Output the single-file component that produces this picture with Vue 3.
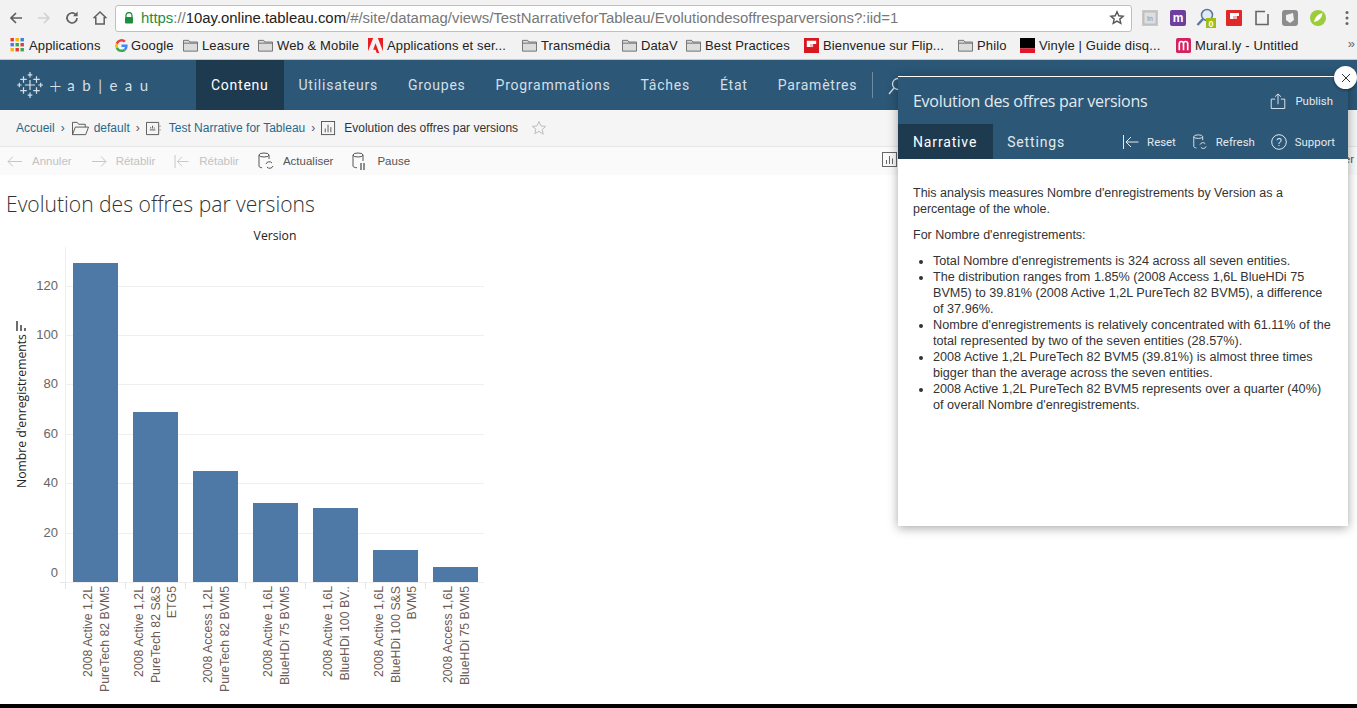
<template>
  <div class="page">
    <!-- browser chrome -->
    <div class="browser-bar">
      <svg class="nav-ic" viewBox="0 0 16 16"><path d="M14 8H3M8 3 3 8l5 5" fill="none" stroke="#5f5f5f" stroke-width="1.7" /></svg>
      <svg class="nav-ic" viewBox="0 0 16 16"><path d="M2 8h11M8 3l5 5-5 5" fill="none" stroke="#d2d2d2" stroke-width="1.7" /></svg>
      <svg class="nav-ic" viewBox="0 0 16 16"><path d="M13 8a5 5 0 1 1-1.5-3.6" fill="none" stroke="#5f5f5f" stroke-width="1.7" /><path d="M13.6 1.6v4.6H9z" fill="#5f5f5f" /></svg>
      <svg class="nav-ic" viewBox="0 0 16 16"><path d="M1.500 8.200 8 2l6.500 6.200M3.800 7v7h8.400V7" fill="none" stroke="#5f5f5f" stroke-width="1.500" /></svg>
      <div class="url-box">
        <svg class="lock" viewBox="0 0 10 12"><path d="M2 5V3.500a3 3 0 0 1 6 0V5" fill="none" stroke="#1e8e3e" stroke-width="1.300" /><rect x="1" y="5" width="8" height="6.500" rx="1" fill="#1e8e3e" /></svg>
        <span class="url"><span class="url-https">https</span><span class="url-dim">://</span>10ay.online.tableau.com<span class="url-dim">/#/site/datamag/views/TestNarrativeforTableau/Evolutiondesoffresparversions?:iid=1</span></span>
        <svg class="url-star" viewBox="0 0 16 16"><path d="m8 1.800 1.800 4 4.300.4-3.300 2.900 1 4.300L8 11.100l-3.800 2.300 1-4.300-3.300-2.900 4.300-.4z" fill="none" stroke="#555" stroke-width="1.400" /></svg>
      </div>
      <div class="ext-icons">
        <svg viewBox="0 0 16 16"><rect width="16" height="16" fill="#c9c9c9" /><rect x="2" y="2" width="12" height="12" fill="#dedede" stroke="#aaa" stroke-width=".6" /><text x="8" y="11" font-size="7" text-anchor="middle" fill="#8a8a8a" font-family="Liberation Sans">In</text></svg>
        <svg viewBox="0 0 16 16"><rect width="16" height="16" rx="2" fill="#6f3f9e" /><text x="8" y="12" font-size="12" font-weight="700" text-anchor="middle" fill="#fff" font-family="Liberation Sans">m</text></svg>
        <svg class="ext-wide" viewBox="0 0 20 20"><circle cx="11" cy="7" r="5.500" fill="#dfeaf5" stroke="#56789c" stroke-width="1.500" /><path d="M7 11 1.500 17" stroke="#56789c" stroke-width="2.400" /><rect x="10" y="10" width="10" height="10" fill="#a2bd14" /><text x="15" y="18.500" font-size="9" font-weight="700" text-anchor="middle" fill="#fff" font-family="Liberation Sans">0</text></svg>
        <svg viewBox="0 0 16 16"><rect width="16" height="16" rx="1" fill="#e12828" /><path d="M4 3h9v3H7v3H4z" fill="#fff" /><path d="M7 6h4v3H7z" fill="#f3b0b0" /></svg>
        <svg viewBox="0 0 16 16"><path d="M11 1.500H2v13h12V4" fill="none" stroke="#666" stroke-width="1.600" /></svg>
        <svg viewBox="0 0 16 16"><rect width="16" height="16" rx="3" fill="#8d8d8d" /><path d="M4 5l7-2 1 7-4 3-4-3z" fill="#f1f1f1" /></svg>
        <svg viewBox="0 0 16 16"><circle cx="8" cy="8" r="8" fill="#9ccb3b" /><path d="M4 12C5 7 8 4 12.500 3 12 8 9 11 4 12z" fill="#fff" /></svg>
        <svg class="kebab" viewBox="0 0 4 16"><circle cx="2" cy="2.500" r="1.500" fill="#666" /><circle cx="2" cy="8" r="1.500" fill="#666" /><circle cx="2" cy="13.500" r="1.500" fill="#666" /></svg>
      </div>
    </div>

    <div class="bookmarks">
      <div v-for="b in bookmarks" :key="b.label" class="bookmark" :style="{ width: b.width + 'px' }">
        <svg v-if="b.icon === 'apps'" class="bm-ic apps" viewBox="0 0 14 14">
          <rect v-for="c in appCells" :key="c.k" :x="c.x" :y="c.y" width="3.400" height="3.400" :fill="c.fill" />
        </svg>
        <svg v-else-if="b.icon === 'google'" class="bm-ic google" viewBox="0 0 16 16">
          <path d="M14.500 8.200c0-.5 0-1-.1-1.400H8v2.700h3.700a3.200 3.200 0 0 1-1.400 2.100l2.200 1.700c1.300-1.200 2-3 2-5.100z" fill="#4285f4" />
          <path d="M8 15c1.900 0 3.400-.6 4.500-1.700l-2.200-1.700c-.6.400-1.400.7-2.300.7-1.800 0-3.300-1.200-3.800-2.800L1.900 11.200A7 7 0 0 0 8 15z" fill="#34a853" />
          <path d="M4.200 9.500a4.200 4.200 0 0 1 0-2.700L1.900 5a7 7 0 0 0 0 6.200z" fill="#fbbc05" />
          <path d="M8 3.800c1 0 1.900.4 2.600 1l2-2A7 7 0 0 0 1.900 5l2.300 1.800C4.700 5 6.200 3.800 8 3.800z" fill="#ea4335" />
        </svg>
        <svg v-else-if="b.icon === 'folder'" class="bm-ic" viewBox="0 0 16 14">
          <path d="M.5 13V1.500h5.500l1.200 1.800h8.300V13z" fill="#dcdcdc" stroke="#6d6d6d" />
          <path d="M.5 4.500h15" stroke="#6d6d6d" />
        </svg>
        <svg v-else-if="b.icon === 'adobe'" class="bm-ic" viewBox="0 0 16 16">
          <path d="M0 0h5.500L0 14zM16 0h-5.500L16 14zM8 5.500 12 16H9.300L8 12.500H5.500z" fill="#ea1c24" />
        </svg>
        <svg v-else-if="b.icon === 'flip'" class="bm-ic" viewBox="0 0 16 16">
          <rect width="16" height="16" fill="#d9171e" /><path d="M3 3h10v3.400H6.400v3.300H3z" fill="#fff" /><path d="M6.400 6.400h3.400v3.300H6.400z" fill="#f5b8ba" />
        </svg>
        <svg v-else-if="b.icon === 'vinyl'" class="bm-ic" viewBox="0 0 16 16">
          <rect width="16" height="11" fill="#000" /><rect y="11" width="16" height="5" fill="#e3172b" />
        </svg>
        <svg v-else-if="b.icon === 'mural'" class="bm-ic" viewBox="0 0 16 16">
          <rect width="16" height="16" rx="2" fill="#d5215e" /><path d="M3.500 13V6a2 2 0 0 1 4.500 0v7M8 6a2 2 0 0 1 4.500 0v7" fill="none" stroke="#fff" stroke-width="1.800" />
        </svg>
        <span>{{ b.label }}</span>
      </div>
      <span class="more">»</span>
    </div>

    <!-- tableau server nav -->
    <div class="top-nav">
      <div class="logo">
        <svg viewBox="0 0 28 28" class="logo-mark">
          <path
            d="M14 0v6M11.500 3h5M14 22v6M11.500 25h5M14 8.500v11M8.500 14h11M7 4.500v7M3.500 8h7M21 4.500v7M17.500 8h7M7 16.500v7M3.500 20h7M21 16.500v7M17.500 20h7M2.500 11.500v5M0 14h5M25.500 11.500v5M23 14h5"
            stroke="#d5dfe6"
            stroke-width="1.300"
          />
        </svg>
        <span class="logo-text"><span class="logo-plus">+</span><span>a</span><span>b</span><span>|</span><span>e</span><span>a</span><span>u</span></span>
      </div>
      <div
        v-for="item in navItems"
        :key="item"
        class="nav-item"
        :class="{ active: item === 'Contenu' }"
      >
        {{ item }}
      </div>
      <div class="nav-divider"></div>
      <svg class="nav-search" viewBox="0 0 18 18"><circle cx="11" cy="7" r="5.500" fill="none" stroke="#d5dfe6" stroke-width="1.300" /><path d="M7 11l-5 6" stroke="#d5dfe6" stroke-width="1.300" /></svg>
    </div>

    <div class="crumbs">
      <span class="crumb-link">Accueil</span>
      <span class="sep">›</span>
      <svg class="crumb-ic folder-ic" viewBox="0 0 18 15"><path d="M.5 14V1h5l1.500 2h7v3M.5 14 3.500 6H17.500l-3 8z" fill="none" stroke="#555" /></svg>
      <span class="crumb-link">default</span>
      <span class="sep">›</span>
      <svg class="crumb-ic" viewBox="0 0 16 16"><path d="M13.500 1.500h-13v13h13zM15 5v1M15 9v1" fill="none" stroke="#555" /><path d="M4 9.500h6M5 8V6.500M7 8V5M9 8V7" fill="none" stroke="#555" /></svg>
      <span class="crumb-link">Test Narrative for Tableau</span>
      <span class="sep">›</span>
      <svg class="crumb-ic" viewBox="0 0 16 16"><rect x=".5" y=".5" width="14" height="14" fill="none" stroke="#555" /><path d="M4.500 12V8M7.500 12V4M10.500 12V6.500" stroke="#555" /></svg>
      <span class="crumb-current">Evolution des offres par versions</span>
      <svg class="crumb-star" viewBox="0 0 16 16"><path d="m8 1.500 2 4.400 4.700.5-3.500 3.100 1 4.700L8 11.300l-4.200 2.400 1-4.700L1.300 6.400 6 5.900z" fill="none" stroke="#bdbdbd" /></svg>
    </div>

    <div class="toolbar">
      <div class="tool dim">
        <svg viewBox="0 0 16 12"><path d="M15 6H1M6 1 1 6l5 5" fill="none" stroke="#c6c6c6" /></svg>
        <span>Annuler</span>
      </div>
      <div class="tool dim">
        <svg viewBox="0 0 16 12"><path d="M1 6h14M10 1l5 5-5 5" fill="none" stroke="#c6c6c6" /></svg>
        <span>Rétablir</span>
      </div>
      <div class="tool dim">
        <svg viewBox="0 0 16 14"><path d="M.5 0v14M15 7H3M8 2 3 7l5 5" fill="none" stroke="#c6c6c6" /></svg>
        <span>Rétablir</span>
      </div>
      <div class="tool">
        <svg class="db" viewBox="0 0 16 18"><ellipse cx="6" cy="3" rx="5" ry="2" fill="none" stroke="#555" /><path d="M1 3v11c0 1 1.500 1.500 3 1.800M11 3v4" fill="none" stroke="#555" /><path d="M8 12a3.500 3.500 0 0 1 6-1M15 14a3.500 3.500 0 0 1-6 1" fill="none" stroke="#555" /></svg>
        <span>Actualiser</span>
      </div>
      <div class="tool">
        <svg class="db" viewBox="0 0 16 18"><ellipse cx="6" cy="3" rx="5" ry="2" fill="none" stroke="#555" /><path d="M1 3v11c0 1 1.500 1.500 4 1.800M11 3v6" fill="none" stroke="#555" /><path d="M9 11v7M12 11v7" stroke="#555" stroke-width="1.300" /></svg>
        <span>Pause</span>
      </div>
      <div class="tool-right">
        <svg viewBox="0 0 15 15"><rect x=".5" y=".5" width="14" height="14" fill="none" stroke="#666" /><path d="M4.500 12V8M7.500 12V4M10.500 12V6.500" stroke="#666" /></svg>
      </div>
      <span class="tool-tail">er</span>
    </div>

    <!-- viz -->
    <div class="viz">
      <h1 class="viz-title">Evolution des offres par versions</h1>
      <svg class="chart" width="500" height="484" viewBox="0 0 500 484">
        <text x="275" y="20" class="axis-title" text-anchor="middle">Version</text>
        <line x1="65.500" y1="27" x2="65.500" y2="369" stroke="#efefef" />
        <line x1="60" y1="362.500" x2="484" y2="362.500" stroke="#e6e6e6" />
        <g v-for="tick in ticks" :key="tick.value">
          <line x1="65" :y1="tick.y" x2="484" :y2="tick.y" stroke="#efefef" />
          <text x="58" :y="tick.label" class="tick" text-anchor="end">{{ tick.value }}</text>
        </g>
        <line v-for="n in 7" :key="n" :x1="5 + n * 60 + 0.5" y1="362" :x2="5 + n * 60 + 0.5" y2="369" stroke="#e6e6e6" />
        <rect
          v-for="bar in bars"
          :key="bar.x"
          :x="bar.x"
          :y="bar.y"
          width="45"
          :height="362 - bar.y"
          fill="#4e79a7"
        />
        <!-- labels read bottom to top and all end at the same height under the axis -->
        <g v-for="bar in bars" :key="'l' + bar.x" :transform="`translate(${bar.x} 366) rotate(-90)`">
          <text
            v-for="(line, i) in bar.lines"
            :key="i"
            x="0"
            :y="bar.offset + i * 16.500"
            class="cat"
            text-anchor="end"
          >{{ line }}</text>
        </g>
        <g transform="translate(26 268) rotate(-90)">
          <text class="axis-title" x="0" y="0">Nombre d'enregistrements</text>
        </g>
        <path d="M17 101v10M21 105v6M25 108v3" stroke="#555" stroke-width="1.700" fill="none" />
      </svg>
    </div>

    <div class="bottom-edge"></div>

    <!-- narrative extension panel, floats over the page -->
    <div class="panel">
      <div class="panel-head">
        <div class="panel-title">Evolution des offres par versions</div>
        <div class="panel-action publish">
          <svg viewBox="0 0 16 17"><path d="M5 6.500H.8v10h14.400v-10H11M8 12V1M4.800 4 8 1l3.200 3" fill="none" stroke="#e3eaee" /></svg>
          <span>Publish</span>
        </div>
      </div>
      <div class="panel-tabs">
        <div class="tab active">Narrative</div>
        <div class="tab">Settings</div>
        <div class="tab-actions">
          <div class="panel-action">
            <svg viewBox="0 0 16 14"><path d="M.5 0v14M15.500 7H3M8 2 3 7l5 5" fill="none" stroke="#e3eaee" /></svg>
            <span>Reset</span>
          </div>
          <div class="panel-action">
            <svg viewBox="0 0 16 18"><ellipse cx="6" cy="3" rx="5" ry="2" fill="none" stroke="#e3eaee" /><path d="M1 3v11c0 1 1.500 1.500 3 1.800M11 3v4" fill="none" stroke="#e3eaee" /><path d="M8 12a3.500 3.500 0 0 1 6-1M15 14a3.500 3.500 0 0 1-6 1" fill="none" stroke="#e3eaee" /></svg>
            <span>Refresh</span>
          </div>
          <div class="panel-action">
            <svg viewBox="0 0 16 16"><circle cx="8" cy="8" r="7.300" fill="none" stroke="#e3eaee" /><text x="8" y="11.500" text-anchor="middle" font-size="10" fill="#e3eaee" font-family="Liberation Sans">?</text></svg>
            <span>Support</span>
          </div>
        </div>
      </div>
      <div class="panel-body">
        <p>This analysis measures Nombre d'enregistrements by Version as a percentage of the whole.</p>
        <p>For Nombre d'enregistrements:</p>
        <ul>
          <li v-for="line in narrative" :key="line">{{ line }}</li>
        </ul>
      </div>
      <div class="panel-close">
        <svg viewBox="0 0 10 10"><path d="M1 1l8 8M9 1 1 9" stroke="#333" stroke-width="1" /></svg>
      </div>
    </div>
  </div>
</template>

<script setup>
const bookmarks = [
  { label: "Applications", icon: "apps", width: 104 },
  { label: "Google", icon: "google", width: 69 },
  { label: "Leasure", icon: "folder", width: 75 },
  { label: "Web & Mobile", icon: "folder", width: 110 },
  { label: "Applications et ser...", icon: "adobe", width: 154 },
  { label: "Transmédia", icon: "folder", width: 100 },
  { label: "DataV", icon: "folder", width: 64 },
  { label: "Best Practices", icon: "folder", width: 118 },
  { label: "Bienvenue sur Flip...", icon: "flip", width: 154 },
  { label: "Philo", icon: "folder", width: 62 },
  { label: "Vinyle | Guide disq...", icon: "vinyl", width: 156 },
  { label: "Mural.ly - Untitled", icon: "mural", width: 130 },
];

const appColors = ["#e53935", "#f6b900", "#3a7ee8", "#3a7ee8", "#34a853", "#e53935", "#f6b900", "#e53935", "#34a853"];
const appCells = appColors.map((fill, k) => ({
  k,
  fill,
  x: (k % 3) * 5,
  y: Math.floor(k / 3) * 5,
}));

const navItems = ["Contenu", "Utilisateurs", "Groupes", "Programmations", "Tâches", "État", "Paramètres"];

// y = pixel row of the gridline, label = text baseline ("0" sits above the axis)
const ticks = [
  { value: 120, y: 66.5, label: 70 },
  { value: 100, y: 115.5, label: 119 },
  { value: 80, y: 164.5, label: 168 },
  { value: 60, y: 214.5, label: 218 },
  { value: 40, y: 263.5, label: 267 },
  { value: 20, y: 313.5, label: 317 },
  { value: 0, y: 362.5, label: 357 },
];

const bars = [
  { x: 73, y: 43, lines: ["2008 Active 1,2L", "PureTech 82 BVM5"] },
  { x: 133, y: 192, lines: ["2008 Active 1,2L", "PureTech 82 S&S", "ETG5"] },
  { x: 193, y: 251, lines: ["2008 Access 1,2L", "PureTech 82 BVM5"] },
  { x: 253, y: 283, lines: ["2008 Active 1,6L", "BlueHDi 75 BVM5"] },
  { x: 313, y: 288, lines: ["2008 Active 1,6L", "BlueHDi 100 BV.."] },
  { x: 373, y: 330, lines: ["2008 Active 1,6L", "BlueHDi 100 S&S", "BVM5"] },
  { x: 433, y: 347, lines: ["2008 Access 1,6L", "BlueHDi 75 BVM5"] },
].map((b) => ({
  ...b,
  offset: b.lines.length === 3 ? 10 : 19,
}));

const narrative = [
  "Total Nombre d'enregistrements is 324 across all seven entities.",
  "The distribution ranges from 1.85% (2008 Access 1,6L BlueHDi 75 BVM5) to 39.81% (2008 Active 1,2L PureTech 82 BVM5), a difference of 37.96%.",
  "Nombre d'enregistrements is relatively concentrated with 61.11% of the total represented by two of the seven entities (28.57%).",
  "2008 Active 1,2L PureTech 82 BVM5 (39.81%) is almost three times bigger than the average across the seven entities.",
  "2008 Active 1,2L PureTech 82 BVM5 represents over a quarter (40%) of overall Nombre d'enregistrements.",
];
</script>

<style>
html,
body {
  margin: 0;
  background: #fff;
  overflow: hidden;
}
</style>

<style scoped>
.page {
  position: relative;
  width: 1357px;
  height: 708px;
  overflow: hidden;
  font-family: "Liberation Sans", Arial, sans-serif;
  background: #fff;
}

.browser-bar {
  height: 35px;
  background: #f2f2f2;
  display: flex;
  align-items: center;
  padding: 1px 0 0 8px;
  box-sizing: border-box;
}
.nav-ic {
  width: 16px;
  height: 16px;
  margin-right: 12px;
  flex: none;
}
.url-box {
  width: 1017px;
  height: 27px;
  box-sizing: border-box;
  margin-left: -5px;
  background: #fff;
  border: 1px solid #bfbfbf;
  border-radius: 3px;
  display: flex;
  align-items: center;
  padding-left: 8px;
  flex: none;
}
.lock {
  width: 10px;
  height: 12px;
  margin-right: 7px;
}
.url {
  font-size: 14.9px;
  color: #222;
  white-space: nowrap;
}
.url-https {
  color: #1e8e3e;
}
.url-dim {
  color: #777;
}
.url-star {
  width: 16px;
  height: 16px;
  margin-left: auto;
  margin-right: 6px;
}
.ext-icons {
  display: flex;
  align-items: center;
  gap: 12px;
  margin-left: 10px;
}
.ext-icons svg {
  width: 16px;
  height: 16px;
}
.ext-icons .ext-wide {
  width: 20px;
  height: 20px;
  margin: 0 -2px;
}
.ext-icons .kebab {
  width: 4px;
  margin-left: 7px;
}

.bookmarks {
  height: 25px;
  background: #f2f2f2;
  border-bottom: 1px solid #c8c8c8;
  box-sizing: border-box;
  display: flex;
  align-items: center;
  padding: 0 0 4px 10px;
  font-size: 13px;
  letter-spacing: 0.12px;
  color: #222;
  position: relative;
}
.bookmark {
  display: flex;
  align-items: center;
  gap: 4px;
  white-space: nowrap;
  flex: none;
}
.bm-ic {
  width: 15px;
  height: 15px;
  flex: none;
}
.bm-ic.apps {
  width: 15px;
  height: 14px;
}
.bm-ic.google {
  margin-right: -2px;
}
.more {
  position: absolute;
  right: 2px;
  top: 1px;
  color: #666;
}

.top-nav {
  height: 50px;
  background: #2c5777;
  display: flex;
  align-items: stretch;
  color: #d5dfe6;
  font-family: Roboto, sans-serif;
  font-size: 14px;
  letter-spacing: 0.75px;
}
.logo {
  width: 196px;
  flex: none;
  display: flex;
  align-items: center;
  padding-left: 17px;
  box-sizing: border-box;
}
.logo-mark {
  width: 26px;
  height: 26px;
  flex: none;
}
.logo-text {
  display: flex;
  align-items: center;
  gap: 7.5px;
  margin-left: 6px;
  font-family: Lato, sans-serif;
  font-size: 15px;
  letter-spacing: 0;
}
.logo-plus {
  font-size: 22px;
  font-weight: 300;
  margin-right: -2px;
}
.nav-item {
  padding: 0 15px;
  display: flex;
  align-items: center;
}
.nav-item.active {
  background: #1e3a4f;
  color: #fff;
}
.nav-divider {
  width: 1px;
  height: 26px;
  margin: 12px 0 0 0;
  background: #6d8ba1;
}
.nav-search {
  width: 18px;
  height: 18px;
  margin: 17px 0 0 14px;
}

.crumbs {
  height: 37px;
  background: #f5f5f5;
  border-bottom: 1px solid #e6e6e6;
  box-sizing: border-box;
  display: flex;
  align-items: center;
  padding-left: 16px;
  font-size: 12px;
  color: #333;
}
.crumb-link {
  color: #27698c;
}
.sep {
  margin: 0 6px;
  color: #555;
}
.crumb-ic {
  width: 15px;
  height: 15px;
  margin-right: 8px;
}
.folder-ic {
  width: 17px;
  margin-right: 5px;
  margin-left: 1px;
}
.crumb-star {
  width: 16px;
  height: 16px;
  margin-left: 13px;
}

.toolbar {
  height: 28px;
  background: #fafafa;
  display: flex;
  align-items: center;
  padding-left: 7px;
  font-size: 11.5px;
  color: #555;
  position: relative;
}
.tool {
  display: flex;
  align-items: center;
  gap: 9px;
  margin-right: 19px;
}
.tool svg {
  width: 16px;
  height: 13px;
}
.tool svg.db {
  height: 18px;
}
.tool.dim {
  color: #c2c2c2;
}
.tool-right svg {
  position: absolute;
  left: 882px;
  top: 5px;
  width: 15px;
  height: 15px;
}
.tool-tail {
  position: absolute;
  right: 3px;
  top: 6px;
}

.viz {
  height: 529px;
}
.viz-title {
  margin: 0;
  padding: 16px 0 0 6px;
  font-family: "Open Sans", sans-serif;
  font-size: 21.1px;
  line-height: 26px;
  font-weight: 300;
  color: #333;
}
.chart {
  display: block;
  margin-top: 3px;
}
.axis-title {
  font-family: "Open Sans", sans-serif;
  font-size: 12.2px;
  fill: #222;
}
.tick {
  font-family: "Liberation Sans", sans-serif;
  font-size: 13px;
  fill: #666;
}
.cat {
  font-family: "Liberation Sans", sans-serif;
  font-size: 12.3px;
  fill: #6b5a55;
}

.bottom-edge {
  height: 4px;
  background: #000;
}

.panel {
  position: absolute;
  left: 898px;
  top: 76px;
  width: 450px;
  height: 450px;
  background: #fff;
  box-shadow: 0 2px 10px rgba(0, 0, 0, 0.35);
  border-top: 1px solid #fff;
  box-sizing: border-box;
}
.panel-head {
  height: 46px;
  padding: 1px 15px 0;
  box-sizing: content-box;
  margin-bottom: -1px;
  background: #2c5777;
  border-bottom: 1px solid #4d7692;
  display: flex;
  align-items: center;
  justify-content: space-between;
  color: #e3eaee;
  font-family: "Open Sans", sans-serif;
}
.panel-title {
  font-size: 16px;
  letter-spacing: -0.28px;
}
.panel-action {
  display: flex;
  align-items: center;
  gap: 8px;
  font-size: 11.4px;
  font-family: Roboto, sans-serif;
  letter-spacing: 0;
}
.panel-action svg {
  width: 16px;
  height: 16px;
}
.publish {
  gap: 9px;
}
.panel-tabs {
  height: 35px;
  background: #2c5777;
  display: flex;
  align-items: stretch;
  color: #e3eaee;
  font-family: Roboto, sans-serif;
}
.tab {
  padding: 0 15px 0 14px;
  display: flex;
  align-items: center;
  font-size: 14px;
  letter-spacing: 0.85px;
}
.tab.active {
  padding: 0 16px 0 15px;
  background: #1e3a4f;
  color: #fff;
}
.tab-actions {
  margin-left: auto;
  display: flex;
  align-items: center;
  gap: 16px;
  padding-right: 13px;
}
.panel-body {
  padding: 26px 13px 0 15px;
  font-size: 12.5px;
  line-height: 16px;
  color: #333;
}
.panel-body p {
  margin: 0 0 10px;
}
.panel-body ul {
  margin: 0;
  padding-left: 20px;
  font-size: 12.65px;
}
.panel-close {
  position: absolute;
  right: -9px;
  top: -11px;
  width: 23px;
  height: 23px;
  border-radius: 50%;
  background: #fff;
  box-shadow: 0 1px 3px rgba(0, 0, 0, 0.4);
  display: flex;
  align-items: center;
  justify-content: center;
}
.panel-close svg {
  width: 10px;
  height: 10px;
}
</style>
